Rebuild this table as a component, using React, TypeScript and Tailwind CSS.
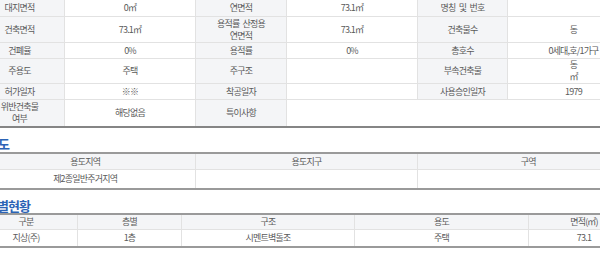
import React from "react";

const font = { fontFamily: '"Noto Sans CJK KR", "Noto Sans", sans-serif' };

type Cell = { t?: React.ReactNode; label?: boolean; span?: number };

const rows: { h: string; cells: Cell[] }[] = [
  {
    h: "h-[17px]",
    cells: [
      { t: "대지면적", label: true },
      { t: "0㎡" },
      { t: "연면적", label: true },
      { t: "73.1㎡" },
      { t: "명칭 및 번호", label: true },
      { t: "" },
    ],
  },
  {
    h: "h-[26px]",
    cells: [
      { t: "건축면적", label: true },
      { t: "73.1㎡" },
      {
        t: (
          <>
            용적률 산정용
            <br />
            연면적
          </>
        ),
        label: true,
      },
      { t: "73.1㎡" },
      { t: "건축물수", label: true },
      { t: "동" },
    ],
  },
  {
    h: "h-[16px]",
    cells: [
      { t: "건폐율", label: true },
      { t: "0%" },
      { t: "용적률", label: true },
      { t: "0%" },
      { t: "총호수", label: true },
      { t: "0세대,호/1가구" },
    ],
  },
  {
    h: "h-[25px]",
    cells: [
      { t: "주용도", label: true },
      { t: "주택" },
      { t: "주구조", label: true },
      { t: "" },
      { t: "부속건축물", label: true },
      {
        t: (
          <>
            동
            <br />㎡
          </>
        ),
      },
    ],
  },
  {
    h: "h-[16px]",
    cells: [
      { t: "허가일자", label: true },
      { t: "※※" },
      { t: "착공일자", label: true },
      { t: "" },
      { t: "사용승인일자", label: true },
      { t: "1979" },
    ],
  },
  {
    h: "h-[26px]",
    cells: [
      {
        t: (
          <>
            위반건축물
            <br />
            여부
          </>
        ),
        label: true,
      },
      { t: "해당없음" },
      { t: "특이사항", label: true },
      { t: "", span: 3 },
    ],
  },
];

export default function App() {
  return (
    <div
      className="w-[600px] h-[255px] overflow-hidden bg-white text-[#5a5a5a] text-[9px] tracking-[-0.8px] [word-spacing:2px]"
      style={font}
    >
      <div className="ml-[-25px] w-[664px]">
        {/* Table 1 */}
        <div className="border-b-2 border-[#858585]">
          {rows.map((r, i) => (
            <div
              key={i}
              className={`grid grid-cols-[90px_131px_91px_131px_90px_131px] ${r.h} ${
                i < rows.length - 1 ? "border-b border-[#e2e2e2]" : ""
              }`}
            >
              {r.cells.map((c, j) => (
                <div
                  key={j}
                  className={`flex items-center justify-center text-center leading-[12px] whitespace-nowrap ${
                    c.label ? "bg-[#f4f5f7]" : "bg-white"
                  } ${j < r.cells.length - 1 ? "border-r border-[#e2e2e2]" : ""} ${
                    c.span === 3 ? "col-span-3" : ""
                  }`}
                >
                  {c.t}
                </div>
              ))}
            </div>
          ))}
        </div>

        {/* Heading 2 */}
        <div className="pt-[8px] pl-[12px] h-[24px] leading-[16px] text-[13px] font-bold text-[#2b63b5] tracking-[-1px]">
          용도
        </div>

        {/* Table 2 */}
        <div className="border-t-2 border-b-2 border-[#9a9a9a]">
          <div className="grid grid-cols-3 h-[16px] bg-[#f4f5f7] border-b border-[#e2e2e2]">
            <div className="flex items-center justify-center border-r border-[#e2e2e2]">용도지역</div>
            <div className="flex items-center justify-center border-r border-[#e2e2e2]">용도지구</div>
            <div className="flex items-center justify-center">구역</div>
          </div>
          <div className="grid grid-cols-3 h-[18px]">
            <div className="flex items-center justify-center border-r border-[#e2e2e2]">제2종일반주거지역</div>
            <div className="flex items-center justify-center border-r border-[#e2e2e2]"></div>
            <div className="flex items-center justify-center"></div>
          </div>
        </div>

        {/* Heading 3 */}
        <div className="pt-[8px] pl-[11px] h-[23px] leading-[15px] text-[13px] font-bold text-[#2b63b5] tracking-[-1px]">
          층별현황
        </div>

        {/* Table 3 */}
        <div className="border-t-2 border-b-2 border-[#9a9a9a]">
          <div className="grid grid-cols-[103px_104px_173px_174px_110px] h-[15px] bg-[#f4f5f7] border-b border-[#e2e2e2]">
            <div className="flex items-center justify-center border-r border-[#e2e2e2]">구분</div>
            <div className="flex items-center justify-center border-r border-[#e2e2e2]">층별</div>
            <div className="flex items-center justify-center border-r border-[#e2e2e2]">구조</div>
            <div className="flex items-center justify-center border-r border-[#e2e2e2]">용도</div>
            <div className="flex items-center justify-center">면적(㎡)</div>
          </div>
          <div className="grid grid-cols-[103px_104px_173px_174px_110px] h-[16px]">
            <div className="flex items-center justify-center border-r border-[#e2e2e2]">지상(주)</div>
            <div className="flex items-center justify-center border-r border-[#e2e2e2]">1층</div>
            <div className="flex items-center justify-center border-r border-[#e2e2e2]">시멘트벽돌조</div>
            <div className="flex items-center justify-center border-r border-[#e2e2e2]">주택</div>
            <div className="flex items-center justify-center">73.1</div>
          </div>
        </div>
      </div>
    </div>
  );
}
